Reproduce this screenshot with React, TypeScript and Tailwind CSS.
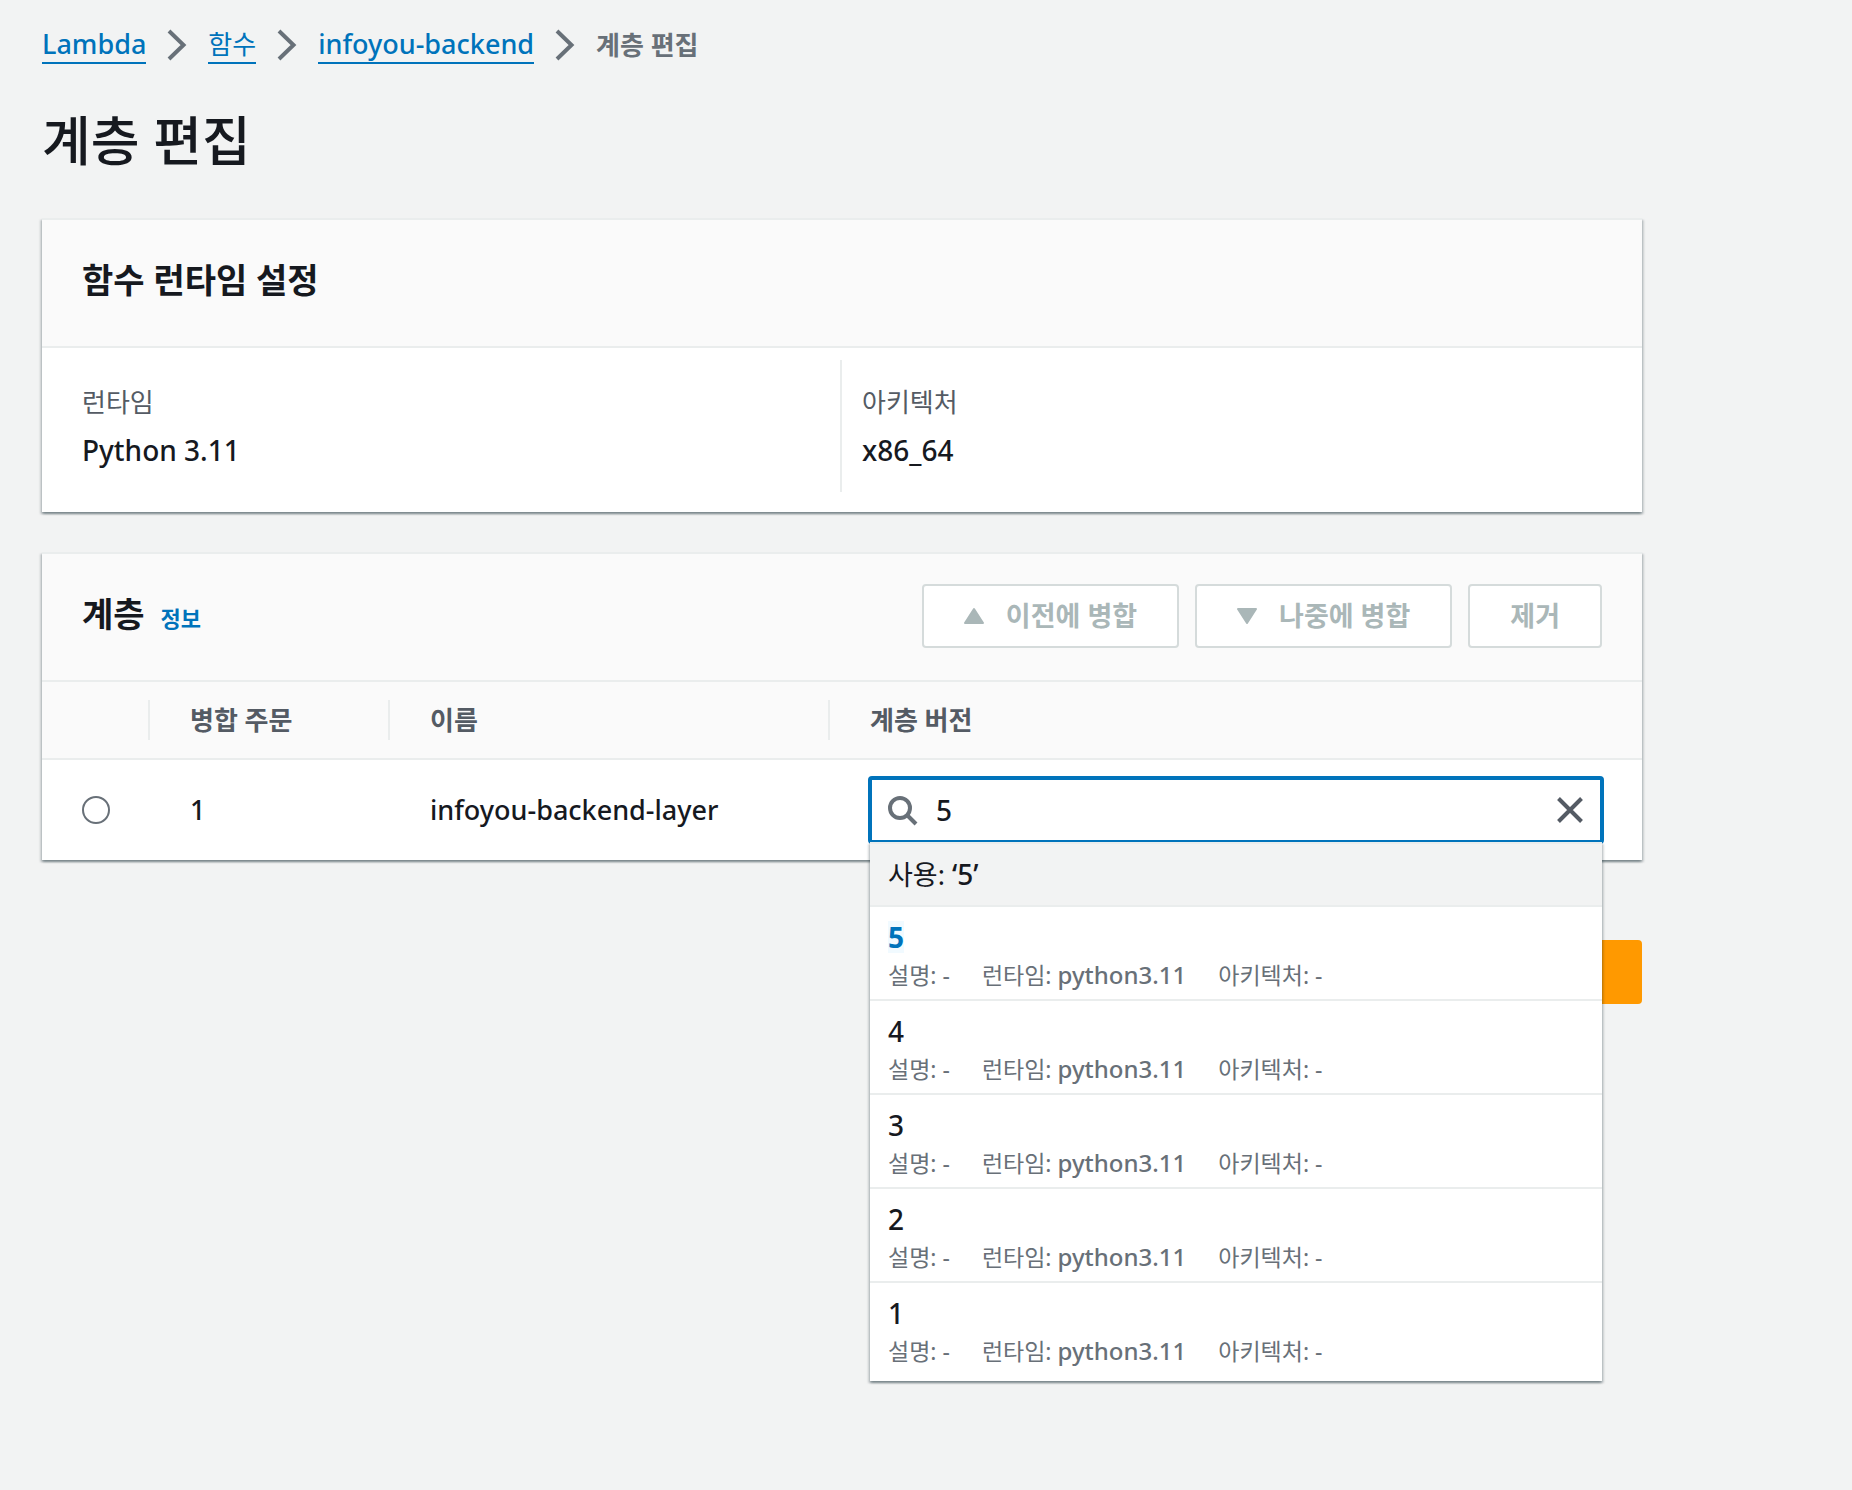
import { useState } from "react";
import type { ReactNode } from "react";

type LayerVersion = {
  version: string;
  description: string;
  runtime: string;
  architecture: string;
};

const versions: LayerVersion[] = ["5", "4", "3", "2", "1"].map((version) => ({
  version,
  description: "-",
  runtime: "python3.11",
  architecture: "-",
}));

const ChevronIcon = () => (
  <svg className="h-8 w-5 shrink-0" viewBox="0 0 20 32" fill="none" aria-hidden="true">
    <path d="M2 2L16.5 16L2 30" stroke="#687078" strokeWidth="4" />
  </svg>
);

const SearchIcon = () => (
  <svg className="h-8 w-8 shrink-0" viewBox="0 0 32 32" fill="none" aria-hidden="true">
    <circle cx="14" cy="14" r="10" stroke="#687078" strokeWidth="4" />
    <path d="M21 21L30 30" stroke="#687078" strokeWidth="4" />
  </svg>
);

const CloseIcon = () => (
  <svg className="h-8 w-8" viewBox="0 0 32 32" fill="none" aria-hidden="true">
    <path d="M4.5 4.5L27.5 27.5M27.5 4.5L4.5 27.5" stroke="#545b64" strokeWidth="4" />
  </svg>
);

const TriangleIcon = ({ down = false }: { down?: boolean }) => (
  <svg
    className={down ? "h-5 w-5 rotate-180" : "h-5 w-5"}
    viewBox="0 0 20 20"
    fill="#aab7b8"
    stroke="#aab7b8"
    strokeWidth="2"
    strokeLinejoin="round"
    aria-hidden="true"
  >
    <path d="M10 3L19 17H1Z" />
  </svg>
);

const Panel = ({ children }: { children: ReactNode }) => (
  <section className="border-t-2 border-[#eaeded] bg-white shadow-[0_2px_2px_0_rgba(0,28,36,0.3),2px_2px_2px_0_rgba(0,28,36,0.15),-2px_2px_2px_0_rgba(0,28,36,0.15)]">
    {children}
  </section>
);

const PanelHeader = ({ children }: { children: ReactNode }) => (
  <header className="border-b-2 border-[#eaeded] bg-[#fafafa] px-10 pt-[30px] pb-8">
    <div className="flex min-h-16 items-center justify-between">{children}</div>
  </header>
);

const DisabledButton = ({ children }: { children: ReactNode }) => (
  <button
    type="button"
    disabled
    className="flex h-16 items-center gap-[22px] rounded border-2 border-[#d5dbdb] bg-white px-10 text-[27px] leading-9 font-bold text-[#aab7b8]"
  >
    {children}
  </button>
);

const BreadcrumbLink = ({ children }: { children: ReactNode }) => (
  <a href="#" className="border-b-2 border-[#0073bb] text-[#0073bb]">
    {children}
  </a>
);

const VersionOption = ({ item, query }: { item: LayerVersion; query: string }) => (
  <li
    role="option"
    aria-selected={false}
    className="border-b-2 border-[#eaeded] px-[18px] pt-3 pb-2 last:border-b-0"
  >
    <div className="text-[28px] leading-9 font-medium">
      {item.version === query ? (
        <mark className="inline-block bg-[#f1faff] leading-8 font-bold text-[#0073bb]">
          {item.version}
        </mark>
      ) : (
        item.version
      )}
    </div>
    <div className="mt-1 flex gap-8 text-[23px] leading-8 text-[#687078]">
      <span>설명: {item.description}</span>
      <span>
        런타임: <span className="text-[24px] font-medium">{item.runtime}</span>
      </span>
      <span>아키텍처: {item.architecture}</span>
    </div>
  </li>
);

const VersionPicker = () => {
  const [query, setQuery] = useState("5");

  return (
    <div className="relative">
      <div className="flex h-[68px] items-center rounded border-4 border-[#0073bb] bg-white px-3.5">
        <SearchIcon />
        <input
          type="text"
          role="combobox"
          aria-label="계층 버전"
          aria-expanded="true"
          aria-controls="layer-versions"
          value={query}
          onChange={(e) => setQuery(e.target.value)}
          className="ml-[18px] h-9 min-w-0 flex-1 bg-transparent text-[28px] leading-9 font-medium outline-none"
        />
        <button type="button" aria-label="지우기" onClick={() => setQuery("")}>
          <CloseIcon />
        </button>
      </div>
      <ul
        id="layer-versions"
        role="listbox"
        aria-label="계층 버전"
        className="absolute inset-x-0.5 top-[66px] z-10 border-t-2 border-[#eaeded] bg-white pb-1.5 shadow-[0_2px_2px_0_rgba(0,28,36,0.3),2px_2px_2px_0_rgba(0,28,36,0.15),-2px_2px_2px_0_rgba(0,28,36,0.15)]"
      >
        <li
          role="option"
          aria-selected={true}
          className="border-b-2 border-[#eaeded] bg-[#f2f3f3] px-[18px] py-3 text-[27px] leading-9"
        >
          사용: <span className="text-[28px] font-medium">‘{query}’</span>
        </li>
        {versions.map((item) => (
          <VersionOption key={item.version} item={item} query={query} />
        ))}
      </ul>
    </div>
  );
};

const ColumnTitle = ({ children }: { children: ReactNode }) => (
  <th scope="col" className="border-b-2 border-[#eaeded] py-[18px] text-left">
    <div className="flex h-10 items-center border-l-2 border-[#eaeded] pl-10 text-[26px] leading-9 font-bold">
      {children}
    </div>
  </th>
);

export default function App() {
  return (
    <main className="min-h-screen bg-[#f2f3f3] pt-[26px] pr-[210px] pb-10 pl-[42px] font-['Noto_Sans','Noto_Sans_CJK_KR',sans-serif] text-[27px] leading-9 text-[#16191f]">
      <nav aria-label="이동 경로" className="flex items-center gap-[21px] text-[27px] leading-9 font-medium">
        <BreadcrumbLink>Lambda</BreadcrumbLink>
        <ChevronIcon />
        <BreadcrumbLink>
          <span className="text-[26px] font-normal">함수</span>
        </BreadcrumbLink>
        <ChevronIcon />
        <BreadcrumbLink>infoyou-backend</BreadcrumbLink>
        <ChevronIcon />
        <span aria-current="page" className="text-[26px] font-bold text-[#687078]">
          계층 편집
        </span>
      </nav>

      <h1 className="my-[41px] text-[53px] leading-[72px] font-medium">계층 편집</h1>

      <Panel>
        <PanelHeader>
          <h2 className="pb-1 text-[34px] leading-[48px] font-bold">함수 런타임 설정</h2>
        </PanelHeader>
        <dl className="grid grid-cols-2 pt-3 pb-5">
          <div className="border-r-2 border-[#eaeded] py-6 pl-10">
            <dt className="text-[26px] text-[#545b64]">런타임</dt>
            <dd className="mt-3 text-[28px] font-medium">Python 3.11</dd>
          </div>
          <div className="py-6 pl-5">
            <dt className="text-[26px] text-[#545b64]">아키텍처</dt>
            <dd className="mt-3 text-[28px] font-medium">x86_64</dd>
          </div>
        </dl>
      </Panel>

      <div className="mt-10">
        <Panel>
          <PanelHeader>
            <div className="flex items-baseline gap-4 pb-1">
              <h2 className="text-[34px] leading-[48px] font-bold">계층</h2>
              <a href="#" className="text-[22px] leading-8 font-bold text-[#0073bb]">
                정보
              </a>
            </div>
            <div className="flex gap-4">
              <DisabledButton>
                <TriangleIcon />
                이전에 병합
              </DisabledButton>
              <DisabledButton>
                <TriangleIcon down />
                나중에 병합
              </DisabledButton>
              <DisabledButton>제거</DisabledButton>
            </div>
          </PanelHeader>
          <table className="w-full table-fixed border-separate border-spacing-0">
            <colgroup>
              <col className="w-[106px]" />
              <col className="w-60" />
              <col className="w-[440px]" />
              <col />
            </colgroup>
            <thead className="bg-[#fafafa] text-[#545b64]">
              <tr>
                <td className="border-b-2 border-[#eaeded]" />
                <ColumnTitle>병합 주문</ColumnTitle>
                <ColumnTitle>이름</ColumnTitle>
                <ColumnTitle>계층 버전</ColumnTitle>
              </tr>
            </thead>
            <tbody className="font-medium">
              <tr>
                <td className="py-4 pl-10">
                  <input
                    type="radio"
                    name="layer"
                    aria-label="infoyou-backend-layer"
                    className="block h-7 w-7 appearance-none rounded-full border-2 border-[#687078] bg-white checked:border-8 checked:border-[#0073bb]"
                  />
                </td>
                <td className="py-4 pl-[42px]">1</td>
                <td className="py-4 pl-[42px]">infoyou-backend-layer</td>
                <td className="py-4 pr-[38px] pl-10 font-normal">
                  <VersionPicker />
                </td>
              </tr>
            </tbody>
          </table>
        </Panel>
      </div>

      <div className="mt-20 flex justify-end">
        <button type="submit" aria-label="저장" className="h-16 w-32 rounded bg-[#ff9900]" />
      </div>
    </main>
  );
}
